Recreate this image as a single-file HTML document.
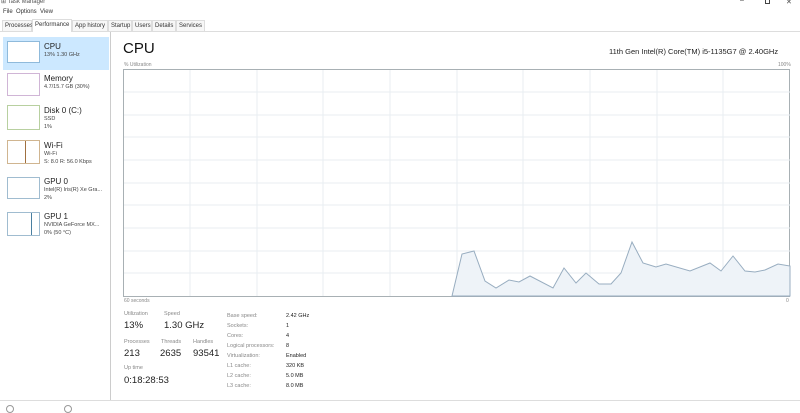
<!DOCTYPE html>
<html><head><meta charset="utf-8"><style>
*{margin:0;padding:0;box-sizing:border-box}
body{width:800px;height:411px;background:#fff;font-family:"Liberation Sans",sans-serif;color:#222;position:relative;overflow:hidden}
.a{position:absolute;white-space:nowrap}
.s{font-size:6px;color:#555}
.tab{position:absolute;top:20px;height:11px;font-size:6px;color:#333;border:1px solid #ddd;border-bottom:none;padding:2px 2px 0;background:#f7f7f7}
.th{position:absolute;left:7px;width:33px;border:1px solid #bbb;background:#fff}
.nm{position:absolute;left:44px;font-size:8px;color:#222}
.sub{position:absolute;left:44px;font-size:5.5px;color:#444;line-height:8px}
.lb{font-size:5.5px;color:#888}
.bv{font-size:9.5px;color:#222}
</style></head><body>
<div class="a s" style="left:1px;top:-2px;font-size:6px">⊞ Task Manager</div>
<div class="a" style="left:740px;top:-3px;font-size:7px;color:#444">–</div>
<div class="a" style="left:765px;top:-1px;width:5px;height:5px;border:1px solid #444"></div>
<div class="a" style="left:786px;top:-2px;font-size:7px;color:#444">✕</div>
<div class="a s" style="left:3px;top:9px;color:#333">File&nbsp; Options&nbsp; View</div>
<div style="position:absolute;left:0;top:31px;width:800px;border-top:1px solid #ddd"></div>
<div class="tab" style="left:2px;width:30px">Processes</div>
<div class="tab" style="left:32px;width:40px;background:#fff;top:19px;height:13px">Performance</div>
<div class="tab" style="left:72px;width:36px">App history</div>
<div class="tab" style="left:108px;width:24px">Startup</div>
<div class="tab" style="left:132px;width:20px">Users</div>
<div class="tab" style="left:152px;width:24px">Details</div>
<div class="tab" style="left:176px;width:29px">Services</div>
<div style="position:absolute;left:110px;top:32px;height:368px;border-left:1px solid #ccc"></div>
<div style="position:absolute;left:3px;top:37px;width:106px;height:33px;background:#cce8ff"></div>
<div class="th" style="top:41px;height:22px;border-color:#8fbadb"></div>
<div class="nm" style="top:42px">CPU</div><div class="sub" style="top:51px">13% 1.30 GHz</div>
<div class="th" style="top:73px;height:23px;border-color:#d0b5d6"></div>
<div class="nm" style="top:74px">Memory</div><div class="sub" style="top:83px">4.7/15.7 GB (30%)</div>
<div class="th" style="top:105px;height:25px;border-color:#b8d0a0"></div>
<div class="nm" style="top:106px">Disk 0 (C:)</div><div class="sub" style="top:115px">SSD<br>1%</div>
<div class="th" style="top:140px;height:24px;border-color:#d0b590"></div>
<div class="a" style="left:25px;top:141px;width:1px;height:22px;background:#a07040"></div>
<div class="nm" style="top:141px">Wi-Fi</div><div class="sub" style="top:150px">Wi-Fi<br>S: 8.0 R: 56.0 Kbps</div>
<div class="th" style="top:177px;height:22px;border-color:#a0bcd0"></div>
<div class="nm" style="top:177px">GPU 0</div><div class="sub" style="top:186px">Intel(R) Iris(R) Xe Gra...<br>2%</div>
<div class="th" style="top:212px;height:24px;border-color:#a0bcd0"></div>
<div class="a" style="left:31px;top:213px;width:1px;height:22px;background:#4a7fa0"></div>
<div class="nm" style="top:212px">GPU 1</div><div class="sub" style="top:221px">NVIDIA GeForce MX...<br>0% (50 °C)</div>
<div class="a" style="left:123px;top:40px;font-size:15px;color:#111">CPU</div>
<div class="a" style="left:609px;top:47px;font-size:7.5px;color:#222">11th Gen Intel(R) Core(TM) i5-1135G7 @ 2.40GHz</div>
<div class="a lb" style="left:124px;top:62px;font-size:5px">% Utilization</div>
<div class="a lb" style="left:778px;top:62px;font-size:5px">100%</div>
<svg class="a" style="left:123px;top:69px" width="668" height="228" viewBox="123 69 668 228">
<rect x="123.5" y="69.5" width="666" height="227" fill="#fff" stroke="#a8b0b4" stroke-width="1"/>
<g stroke="#e8eef2" stroke-width="1">
<path d="M190 70V296M257 70V296M323 70V296M390 70V296M457 70V296M523 70V296M590 70V296M657 70V296M723 70V296"/>
<path d="M124 92H790M124 115H790M124 137H790M124 160H790M124 183H790M124 205H790M124 228H790M124 251H790M124 273H790"/>
</g>
<path d="M452 296L462 254L474 251L485 281L496 288L509 280L519 282L530 276L553 288L564 268L576 283L586 273L599 284L611 284L621 273L632 242L643 263L656 267L666 264L690 271L710 263L721 271L733 256L745 271L755 272L765 270L778 264L790 266V296Z" fill="#eef3f8" stroke="#98adc0" stroke-width="1"/>
</svg>
<div class="a lb" style="left:124px;top:298px;font-size:5px">60 seconds</div>
<div class="a lb" style="left:786px;top:298px;font-size:5px">0</div>
<div class="a lb" style="left:124px;top:311px">Utilization</div>
<div class="a lb" style="left:164px;top:311px">Speed</div>
<div class="a bv" style="left:124px;top:320px">13%</div>
<div class="a bv" style="left:164px;top:320px">1.30 GHz</div>
<div class="a lb" style="left:124px;top:339px">Processes</div>
<div class="a lb" style="left:161px;top:339px">Threads</div>
<div class="a lb" style="left:193px;top:339px">Handles</div>
<div class="a bv" style="left:124px;top:348px">213</div>
<div class="a bv" style="left:160px;top:348px">2635</div>
<div class="a bv" style="left:193px;top:348px">93541</div>
<div class="a lb" style="left:124px;top:365px">Up time</div>
<div class="a bv" style="left:124px;top:375px">0:18:28:53</div>
<div class="a lb" style="left:227px;top:311px;line-height:10px">Base speed:<br>Sockets:<br>Cores:<br>Logical processors:<br>Virtualization:<br>L1 cache:<br>L2 cache:<br>L3 cache:</div>
<div class="a" style="left:286px;top:311px;line-height:10px;font-size:5.5px;color:#222">2.42 GHz<br>1<br>4<br>8<br>Enabled<br>320 KB<br>5.0 MB<br>8.0 MB</div>
<div style="position:absolute;left:0;top:400px;width:800px;border-top:1px solid #ddd"></div>
<div class="a" style="left:6px;top:405px;width:8px;height:8px;border:1px solid #999;border-radius:50%"></div>
<div class="a" style="left:64px;top:405px;width:8px;height:8px;border:1px solid #999;border-radius:50%"></div>
</body></html>
